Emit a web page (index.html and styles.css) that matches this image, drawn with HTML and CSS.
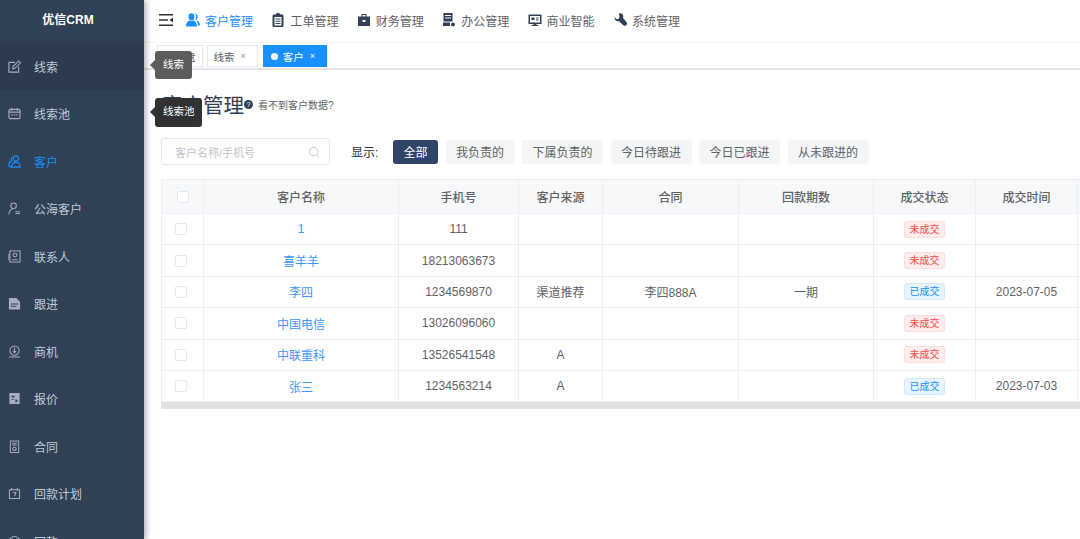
FILE: index.html
```html
<!DOCTYPE html>
<html lang="zh-CN">
<head>
    <meta charset="UTF-8">
    <meta name="viewport" content="width=device-width, initial-scale=1.0">
    <title>优信CRM</title>
    <link rel="stylesheet" href="styles.css">
</head>
<body>
    <div class="sidebar">
        <div class="logo">优信CRM</div>
        <a class="menu-item hover">
            <svg viewBox="0 0 14 14" fill="none" stroke="currentColor" stroke-width="1.2"><path d="M7.500 2.500H1v10.500h10.500V7"/><path d="M5 9.500l.5-2.500L11.500 1 13.500 3 7.500 9z"/></svg>
            线索
        </a>
        <a class="menu-item">
            <svg viewBox="0 0 14 14" fill="none" stroke="currentColor" stroke-width="1.2"><rect x="1" y="2.500" width="12" height="10" rx="1.500"/><path d="M1 5.500h12M4 1v3M10 1v3M3.500 8.500h1.500M6.300 8.500h1.500M9 8.500h1.500"/></svg>
            线索池
        </a>
        <a class="menu-item active">
            <svg viewBox="0 0 14 14" fill="none" stroke="currentColor" stroke-width="1.2"><circle cx="8.500" cy="3.800" r="2.800"/><path d="M4 13c-.5-3 1.500-5 4.500-5s5 2 4.500 5zM5 2.500C3.500 3 3 4.800 3.800 6.300 2 7 .5 9 1 12.500l2.500.5"/></svg>
            客户
        </a>
        <a class="menu-item">
            <svg viewBox="0 0 14 14" fill="none" stroke="currentColor" stroke-width="1.100"><circle cx="6" cy="4" r="3"/><path d="M1 13.500c0-3.500 1.500-5.500 4-6M8 10.500h5M8 12.500h5"/></svg>
            公海客户
        </a>
        <a class="menu-item">
            <svg viewBox="0 0 14 14" fill="none" stroke="currentColor" stroke-width="1.100"><rect x="2" y="1" width="11" height="12"/><circle cx="7.500" cy="5.500" r="2"/><path d="M4.500 10.500h6M1 4v7"/></svg>
            联系人
        </a>
        <a class="menu-item">
            <svg viewBox="0 0 14 14" fill="currentColor"><path d="M1 1h8l4 4v8.500H1zM3 7v1h8V7zm0 2.500v1h6v-1z" fill-rule="evenodd"/></svg>
            跟进
        </a>
        <a class="menu-item">
            <svg viewBox="0 0 14 14" fill="none" stroke="currentColor" stroke-width="1.100"><circle cx="7" cy="6" r="5"/><path d="M7 3v5M5.300 6.500L7 8.300l1.700-1.800M1 13h12"/></svg>
            商机
        </a>
        <a class="menu-item">
            <svg viewBox="0 0 14 14" fill="currentColor"><path d="M1.500 1h11v12h-11zM4 4v2h3V4zm0 3.500v1h2v-1zm4 0v4l3-2z" fill-rule="evenodd"/></svg>
            报价
        </a>
        <a class="menu-item">
            <svg viewBox="0 0 14 14" fill="none" stroke="currentColor" stroke-width="1.100"><path d="M2.500 1h9v12.500h-9zM4.500 3.500h5M4.500 5.500h5"/><circle cx="7" cy="9.500" r="1.800"/></svg>
            合同
        </a>
        <a class="menu-item">
            <svg viewBox="0 0 14 14" fill="none" stroke="currentColor" stroke-width="1.100"><path d="M1.500 3h11v9.500h-11zM4 1v3M10 1v3M5.500 6h3L7 10"/></svg>
            回款计划
        </a>
        <a class="menu-item">
            <svg viewBox="0 0 14 14" fill="none" stroke="currentColor" stroke-width="1.100"><circle cx="7" cy="7" r="5.500"/><path d="M4.500 5.500h1M8.500 5.500h1"/></svg>
            回款
        </a>
    </div>

    <div class="main">
        <div class="topbar">
            <svg class="hamburger" viewBox="0 0 14 12" fill="#303133"><path d="M0 0h14v1.500H0zM0 5.200h9v1.500H0zM0 10.500h14V12H0zM14 3.500v5L10.500 6z"/></svg>
            <a class="nav-item active">
                <svg viewBox="0 0 14 14" fill="currentColor"><ellipse cx="5.500" cy="3.800" rx="3" ry="3.600"/><path d="M0 13.500c0-3 1-5 3.500-6 1.200.8 2.800.8 4 0 2.500 1 3.500 3 3.500 6zM9 .6c1.700.3 2.700 1.700 2.700 3.300S10.900 6.600 9.700 7c2.800.8 4.300 3 4.300 5.500h-2c0-2.500-1-4.500-2.500-5.800C10.500 5 10.500 2.500 9 .6z"/></svg>
                客户管理
            </a>
            <a class="nav-item">
                <svg viewBox="0 0 14 14" fill="#304156"><path d="M3 1.500h1.500C5 .5 6 0 7 0s2 .5 2.500 1.500H11c.8 0 1.500.7 1.500 1.500v9.500c0 .8-.7 1.500-1.500 1.500H3c-.8 0-1.500-.7-1.500-1.500V3c0-.8.7-1.500 1.500-1.500zM3.500 4v8.500h7V4zm1 1.500h5v1h-5zm0 2.200h5v1h-5zm0 2.200h5v1h-5z" fill-rule="evenodd"/></svg>
                工单管理
            </a>
            <a class="nav-item">
                <svg viewBox="0 0 14 14" fill="#304156"><path d="M1 3.500h3.500V1h5v2.500H13v9.500H1zM5.500 2v1.500h3V2zM5.500 7v2h3V7z" fill-rule="evenodd"/></svg>
                财务管理
            </a>
            <a class="nav-item">
                <svg viewBox="0 0 14 14" fill="#304156"><path d="M1.500 0h9v8.500h-9zM3 2v1h6V2zm0 2.500v1h6v-1zM1 9.500h7v3.500H1z" fill-rule="evenodd"/><circle cx="11" cy="11.500" r="2"/></svg>
                办公管理
            </a>
            <a class="nav-item">
                <svg viewBox="0 0 14 14" fill="#304156"><path d="M.5 1.500h13V11h-5v1h2v1h-7v-1h2v-1h-5zM2 3v6.500h10V3zm1.500 1.500h3v2.500h-3zm4.500 0h2.500v1H8zm0 2h2.500v1H8z" fill-rule="evenodd"/></svg>
                商业智能
            </a>
            <a class="nav-item">
                <svg viewBox="0 0 14 14" fill="#304156"><path d="M6 .5c2-.8 4.200.6 4.300 2.800 0 .6-.1 1-.3 1.500l3.800 4.700c.5.700.4 1.500-.2 2.200l-.8.8c-.7.6-1.500.6-2.200 0L6 8.200c-2.400.6-4.700-1.400-4.500-4l2.400 2 2-.5.600-2z"/></svg>
                系统管理
            </a>
        </div>

        <div class="tags">
            <span class="tag">仪表盘</span>
            <span class="tag">线索<i>×</i></span>
            <span class="tag current"><b></b>客户<i>×</i></span>
        </div>

        <div class="content">
            <div class="title-row">
                <h1>客户管理</h1>
                <span class="help">?</span>
                <span class="help-text">看不到客户数据?</span>
            </div>

            <div class="filters">
                <div class="search">
                    <span>客户名称/手机号</span>
                    <svg viewBox="0 0 14 14" fill="none" stroke="#c0c4cc" stroke-width="1.100"><circle cx="6.500" cy="6.500" r="5"/><path d="M10 10l2.500 2.500"/></svg>
                </div>
                <span class="filter-label">显示:</span>
                <button class="chip selected">全部</button>
                <button class="chip">我负责的</button>
                <button class="chip">下属负责的</button>
                <button class="chip">今日待跟进</button>
                <button class="chip">今日已跟进</button>
                <button class="chip">从未跟进的</button>
            </div>

            <div class="table-wrap">
                <table class="customer-table">
                    <colgroup>
                        <col class="col-check"><col class="col-name"><col class="col-phone"><col class="col-source"><col class="col-contract"><col class="col-period"><col class="col-status"><col class="col-date"><col class="col-extra">
                    </colgroup>
                    <thead>
                        <tr>
                            <th><span class="check head-check"></span></th>
                            <th>客户名称</th><th>手机号</th><th>客户来源</th><th>合同</th><th>回款期数</th><th>成交状态</th><th>成交时间</th><th></th>
                        </tr>
                    </thead>
                    <tbody>
                        <tr>
                            <td><span class="check"></span></td><td class="link">1</td><td>111</td><td></td><td></td><td></td>
                            <td><span class="status no">未成交</span></td><td></td><td></td>
                        </tr>
                        <tr>
                            <td><span class="check"></span></td><td class="link">喜羊羊</td><td>18213063673</td><td></td><td></td><td></td>
                            <td><span class="status no">未成交</span></td><td></td><td></td>
                        </tr>
                        <tr>
                            <td><span class="check"></span></td><td class="link">李四</td><td>1234569870</td><td>渠道推荐</td><td>李四888A</td><td>一期</td>
                            <td><span class="status yes">已成交</span></td><td>2023-07-05</td><td></td>
                        </tr>
                        <tr>
                            <td><span class="check"></span></td><td class="link">中国电信</td><td>13026096060</td><td></td><td></td><td></td>
                            <td><span class="status no">未成交</span></td><td></td><td></td>
                        </tr>
                        <tr>
                            <td><span class="check"></span></td><td class="link">中联重科</td><td>13526541548</td><td>A</td><td></td><td></td>
                            <td><span class="status no">未成交</span></td><td></td><td></td>
                        </tr>
                        <tr>
                            <td><span class="check"></span></td><td class="link">张三</td><td>1234563214</td><td>A</td><td></td><td></td>
                            <td><span class="status yes">已成交</span></td><td>2023-07-03</td><td></td>
                        </tr>
                    </tbody>
                </table>
                <div class="scrollbar"></div>
            </div>
        </div>
    </div>

    <div class="tooltip tip-one">线索</div>
    <div class="tooltip tip-two">线索池</div>
</body>
</html>
```

FILE: styles.css
```css
* {
    box-sizing: border-box;
}
html, body {
    height: 100%;
}
body {
    display: flex;
    margin: 0;
    overflow: hidden;
    font-family: "Liberation Sans", "Noto Sans CJK SC", sans-serif;
    font-size: 12px;
    color: #606266;
    background-color: white;
}
.sidebar {
    flex: 0 0 144px;
    height: 100%;
    overflow: hidden;
    background-color: #304156;
    box-shadow: 2px 0 6px rgba(0, 21, 41, 0.35);
    z-index: 2;
}
.logo {
    height: 42.500px;
    padding-right: 8px;
    line-height: 40px;
    text-align: center;
    font-weight: bold;
    color: white;
}
.menu-item {
    display: flex;
    align-items: center;
    gap: 13px;
    height: 47.500px;
    padding-left: 8px;
    color: #bfcbd9;
}
.menu-item svg {
    width: 13px;
    height: 13px;
    opacity: 0.8;
}
.menu-item.hover {
    background-color: #2c3b4f;
}
.menu-item.active {
    color: #1890ff;
}
.menu-item.active svg {
    opacity: 1;
}
.main {
    flex: 1;
    min-width: 0;
    display: flex;
    flex-direction: column;
}
.topbar {
    display: flex;
    align-items: center;
    height: 43px;
    padding: 0 0 2px 15px;
    border-bottom: 1px solid #f3f4f6;
}
.hamburger {
    width: 14px;
    height: 12px;
    margin-right: 13px;
}
.nav-item {
    display: flex;
    align-items: center;
    gap: 5px;
    width: 85.400px;
    color: #606266;
}
.nav-item svg {
    width: 14px;
    height: 14px;
    margin-top: -1px;
}
.nav-item.active {
    color: #1890ff;
}
.tags {
    display: flex;
    gap: 4px;
    height: 27px;
    padding: 2px 0 0 13px;
    border-bottom: 2px solid #e3e5ec;
}
.tag {
    display: flex;
    align-items: center;
    height: 22px;
    padding: 0 6px;
    border: 1px solid #e4e7ed;
    font-size: 10.500px;
    color: #606266;
}
.tag i {
    margin: 0 5px 0 6px;
    font-style: normal;
    font-size: 9px;
    color: #909399;
}
.tag.current {
    margin-left: 1px;
    padding: 0 6px 0 7px;
    border-color: #1890ff;
    background-color: #1890ff;
    color: white;
}
.tag.current b {
    width: 7px;
    height: 7px;
    margin-right: 5px;
    border-radius: 50%;
    background-color: white;
}
.tag.current i {
    color: white;
}
.content {
    padding: 19px 0 0 17px;
}
.title-row {
    display: flex;
    align-items: center;
    height: 30px;
}
.title-row h1 {
    margin: 0 0 0 1px;
    font-size: 20.500px;
    font-weight: normal;
    color: #304156;
}
.help {
    width: 9px;
    height: 9px;
    margin: 0 5px 0 0;
    border-radius: 50%;
    background-color: #304156;
    color: white;
    font-size: 7px;
    line-height: 9px;
    text-align: center;
}
.help-text {
    font-size: 10px;
    color: #606266;
}
.filters {
    display: flex;
    align-items: center;
    height: 27px;
    margin-top: 19px;
}
.search {
    display: flex;
    align-items: center;
    justify-content: space-between;
    width: 169px;
    height: 27px;
    padding: 0 9px 0 13px;
    border: 1px solid #e4e7ed;
    border-radius: 3px;
    font-size: 11px;
    color: #c0c4cc;
}
.search svg {
    width: 12px;
    height: 12px;
}
.filter-label {
    width: 42px;
    margin-left: 21px;
    color: #303133;
}
.chip {
    height: 24px;
    margin-right: 7.500px;
    padding: 0 10.500px;
    border: none;
    border-radius: 3px;
    background-color: #f4f5f7;
    font-family: inherit;
    font-size: 12px;
    color: #606266;
}
.chip.selected {
    background-color: #304468;
    color: white;
}
.table-wrap {
    margin-top: 14px;
    overflow: hidden;
}
.customer-table {
    table-layout: fixed;
    width: 936px;
    border-collapse: collapse;
    border: 1px solid #ebeef5;
    border-bottom: none;
}
.col-check { width: 42px; }
.col-name { width: 195px; }
.col-phone { width: 120px; }
.col-source { width: 84px; }
.col-contract { width: 136px; }
.col-period { width: 135px; }
.col-status { width: 102px; }
.col-date { width: 102px; }
.col-extra { width: 20px; }
.customer-table th, .customer-table td {
    padding: 0;
    border: 1px solid #ebeef5;
    text-align: center;
    font-size: 12px;
}
.customer-table th {
    height: 34px;
    background-color: #f7f8f9;
    color: #606266;
    font-weight: 500;
}
.customer-table td {
    height: 31.400px;
}
.customer-table .link {
    color: #3a97ff;
}
.check {
    display: block;
    width: 12px;
    height: 12px;
    margin-left: 13px;
    border: 1px solid #e4e7ed;
    border-radius: 2px;
    background-color: white;
}
.head-check {
    margin-left: 15px;
}
.status {
    display: inline-block;
    width: 41px;
    height: 17px;
    border: 1px solid #ffdbdb;
    border-radius: 3px;
    background-color: #ffeded;
    font-size: 10px;
    line-height: 15px;
    color: #ff4949;
}
.status.yes {
    border-color: #d1e9ff;
    background-color: #e8f4ff;
    color: #1890ff;
}
.scrollbar {
    height: 7px;
    width: 100%;
    background-color: #e1e1e1;
}
.tooltip {
    position: absolute;
    z-index: 5;
    height: 28px;
    padding: 0 8px;
    border-radius: 3px;
    color: white;
    font-size: 10.500px;
    line-height: 27px;
    white-space: nowrap;
}
.tooltip::before {
    content: "";
    position: absolute;
    left: -5px;
    top: 9px;
    border-top: 5px solid transparent;
    border-bottom: 5px solid transparent;
    border-right: 5px solid;
    border-right-color: inherit;
}
.tip-one {
    left: 155px;
    top: 51px;
    width: 37px;
    background-color: #5c5c5c;
    border-color: #5c5c5c;
}
.tip-two {
    left: 155px;
    top: 98px;
    width: 47px;
    height: 29px;
    background-color: #303133;
    border-color: #303133;
}
```
